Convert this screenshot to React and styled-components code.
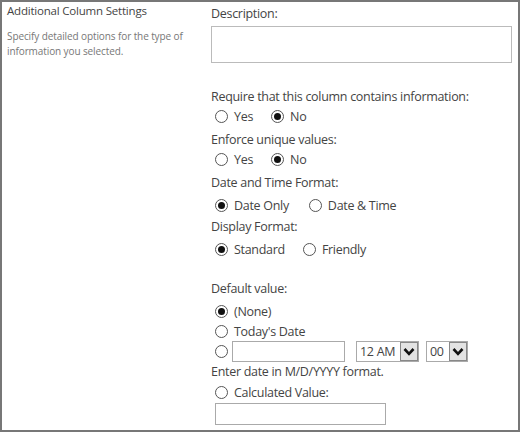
import React from "react"
import styled, { createGlobalStyle } from "styled-components"

const Global = createGlobalStyle`
  html, body { margin: 0; padding: 0; background: #fff; }
  body { font-family: "Open Sans", "Noto Sans", sans-serif; color: #444; }
`

const Frame = styled.div`
  box-sizing: border-box;
  width: 520px;
  height: 432px;
  border: 2px solid #777;
  display: grid;
  grid-template-columns: 209px 1fr;
  overflow: hidden;
`

const Side = styled.div`
  padding: 1px 0 0 5px;
`

const SideTitle = styled.div`
  font-size: 11.5px;
  color: #444;
  letter-spacing: -0.2px;
`

const SideNote = styled.div`
  margin-top: 11px;
  font-size: 10px;
  line-height: 15px;
  color: #777;
  letter-spacing: -0.1px;
`

const Main = styled.div`
  padding: 2px 0 0 0;
  display: flex;
  flex-direction: column;
`

const Label = styled.div`
  font-size: 12.5px;
  line-height: 16px;
  color: #444;
  letter-spacing: -0.3px;
  margin-top: ${({ gap }) => gap ?? 0}px;
`

const Area = styled.div`
  box-sizing: border-box;
  width: 301px;
  height: 37px;
  margin-top: 4px;
  border: 1px solid #bbb;
`

const Row = styled.div`
  display: flex;
  align-items: center;
  gap: ${({ gap }) => gap ?? 18}px;
  padding-left: 4px;
  height: 20px;
  margin-top: ${({ top }) => top ?? 0}px;
`

const Option = styled.label`
  display: flex;
  align-items: center;
  gap: 6px;
  font-size: 12.5px;
  color: #444;
  letter-spacing: -0.3px;
`

const Dot = styled.span`
  box-sizing: border-box;
  width: 13px;
  height: 13px;
  border-radius: 50%;
  border: 1px solid #555;
  display: inline-flex;
  align-items: center;
  justify-content: center;
  flex: none;
  &::after {
    content: "";
    width: 7px;
    height: 7px;
    border-radius: 50%;
    background: ${({ on }) => (on ? "#111" : "transparent")};
  }
`

const Field = styled.div`
  box-sizing: border-box;
  width: ${({ w }) => w}px;
  height: ${({ h }) => h || 21}px;
  border: 1px solid #aaa;
  margin-left: ${({ left }) => left ?? 0}px;
  margin-top: ${({ top }) => top ?? 0}px;
`

const Select = styled.div`
  box-sizing: border-box;
  display: flex;
  align-items: stretch;
  height: 21px;
  border: 1px solid #aaa;
  font-size: 12.5px;
  color: #444;
  margin-left: ${({ left }) => left ?? 0}px;
`

const SelectText = styled.span`
  display: flex;
  align-items: center;
  padding: 0 2px 0 3px;
  letter-spacing: -0.3px;
  width: ${({ w }) => w}px;
`

const Caret = styled.span`
  box-sizing: border-box;
  width: 18px;
  border: 1px solid #888;
  background: #e3e3e3;
  display: flex;
  align-items: center;
  justify-content: center;
`

const Chevron = () => (
  <svg width="12" height="9" viewBox="0 0 12 9">
    <path d="M1.5 2 L6 6.8 L10.5 2" fill="none" stroke="#111" strokeWidth="2.6" />
  </svg>
)

const Radio = ({ on, children }) => (
  <Option>
    <Dot on={on} />
    {children}
  </Option>
)

export default function App() {
  return (
    <>
      <Global />
      <Frame>
        <Side>
          <SideTitle>Additional Column Settings</SideTitle>
          <SideNote>
            Specify detailed options for the type of
            <br />
            information you selected.
          </SideNote>
        </Side>
        <Main>
          <Label gap={2}>Description:</Label>
          <Area />

          <Label gap={26}>Require that this column contains information:</Label>
          <Row top={1}>
            <Radio>Yes</Radio>
            <Radio on>No</Radio>
          </Row>
          <Label gap={6}>Enforce unique values:</Label>
          <Row top={1}>
            <Radio>Yes</Radio>
            <Radio on>No</Radio>
          </Row>
          <Label gap={6}>Date and Time Format:</Label>
          <Row top={4} gap={20}>
            <Radio on>Date Only</Radio>
            <Radio>Date &amp; Time</Radio>
          </Row>
          <Label gap={4}>Display Format:</Label>
          <Row top={4}>
            <Radio on>Standard</Radio>
            <Radio>Friendly</Radio>
          </Row>

          <Label gap={22}>Default value:</Label>
          <Row top={4}>
            <Radio on>(None)</Radio>
          </Row>
          <Row>
            <Radio>Today&apos;s Date</Radio>
          </Row>
          <Row gap={0}>
            <Dot />
            <Field w={113} left={4} />
            <Select left={11}>
              <SelectText w={38}>12 AM</SelectText>
              <Caret>
                <Chevron />
              </Caret>
            </Select>
            <Select left={7}>
              <SelectText w={17}>00</SelectText>
              <Caret>
                <Chevron />
              </Caret>
            </Select>
          </Row>
          <Label gap={3}>Enter date in M/D/YYYY format.</Label>
          <Row top={2}>
            <Radio>Calculated Value:</Radio>
          </Row>
          <Field w={171} h={22} left={4} top={1} />
        </Main>
      </Frame>
    </>
  )
}
